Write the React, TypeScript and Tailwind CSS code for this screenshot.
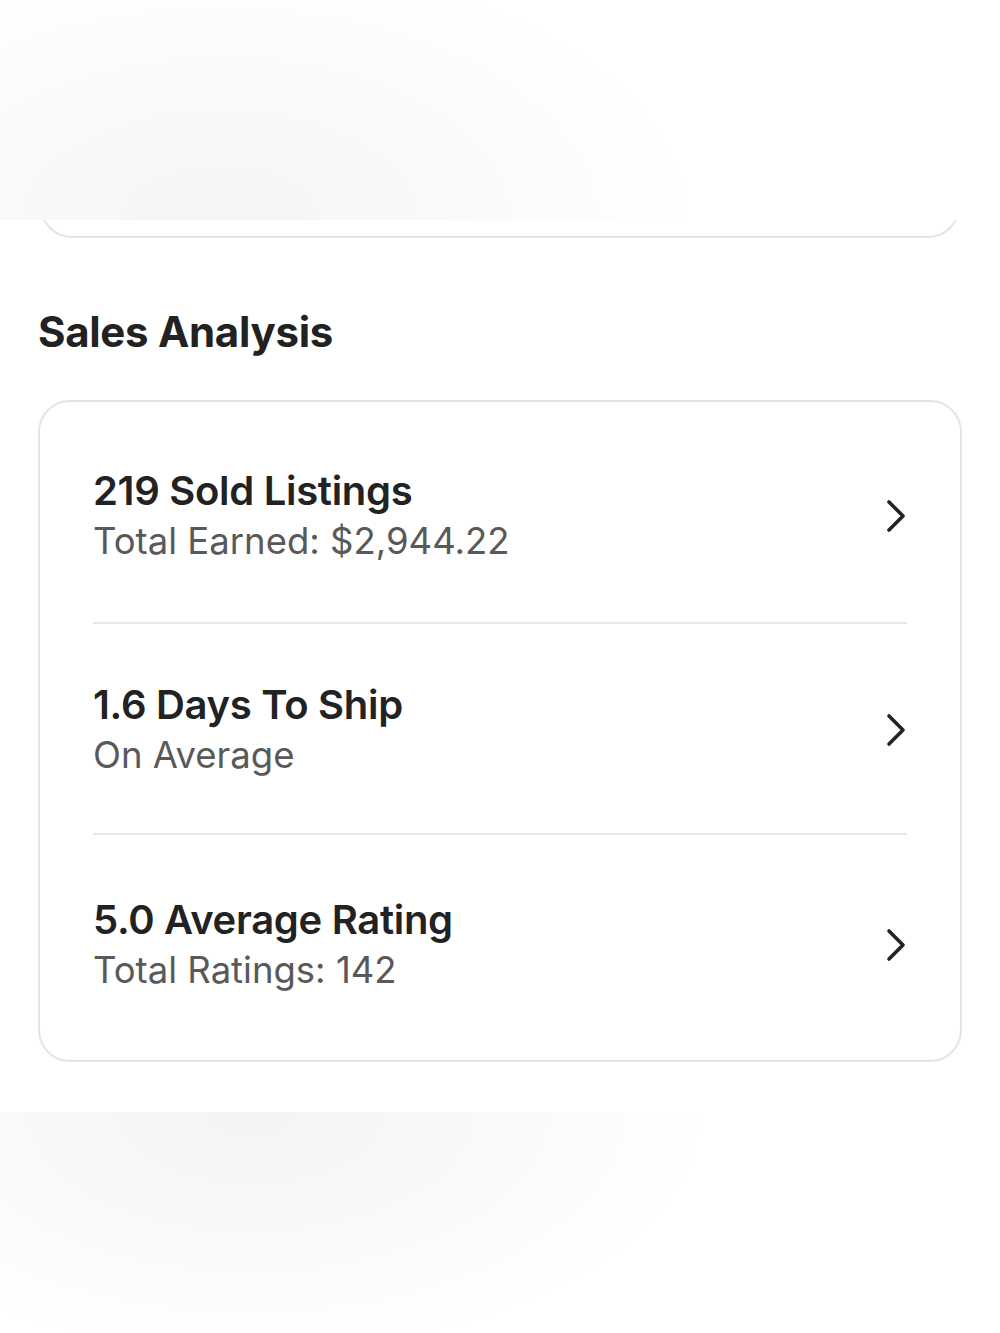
import React from "react";

type Stat = {
  title: string;
  detail: string;
};

const stats: Stat[] = [
  { title: "219 Sold Listings", detail: "Total Earned: $2,944.22" },
  { title: "1.6 Days To Ship", detail: "On Average" },
  { title: "5.0 Average Rating", detail: "Total Ratings: 142" },
];

const Chevron: React.FC = () => (
  <svg width="22" height="36" viewBox="0 0 22 36" fill="none" className="shrink-0">
    <path d="M4 4 L18 18 L4 32" stroke="#222222" strokeWidth="3.6" strokeLinecap="round" strokeLinejoin="round" />
  </svg>
);

// row heights differ a little: the outer rows carry the card's vertical padding
const rowClass = ["h-[222px] pt-[8px] border-b-2", "h-[211px] pt-[2px] border-b-2", "h-[225px] pb-[6px]"];

const StatRow: React.FC<{ stat: Stat; index: number }> = ({ stat, index }) => {
  return (
    <div className={`flex items-center justify-between border-[#e8e8e8] ${rowClass[index]}`}>
      <div className="flex flex-col">
        <p className="text-[40px] leading-[50px] font-semibold text-[#222222] tracking-[-0.3px]">{stat.title}</p>
        <p className="text-[36.5px] leading-[50px] font-normal text-[#595959]">{stat.detail}</p>
      </div>
      <Chevron />
    </div>
  );
};

const SalesAnalysis: React.FC = () => {
  return (
    <div className="relative w-full min-h-[1333px] bg-white font-['Inter','Liberation_Sans',sans-serif] overflow-hidden">
      {/* previous card, mostly scrolled under the header */}
      <div className="pt-[158px]">
        <div className="mx-[40px] h-[80px] rounded-b-[32px] border-2 border-t-0 border-[#e4e4e4] bg-white" />
      </div>

      {/* frosted header */}
      <div className="absolute inset-x-0 top-0 h-[220px] bg-[radial-gradient(ellipse_55%_140%_at_22%_100%,#f5f5f5_0%,#fafafa_45%,#ffffff_85%)]" />

      <h2 className="mt-[69px] px-[38px] text-[42px] leading-[50px] font-bold text-[#222222] tracking-[-0.3px]">
        Sales Analysis
      </h2>

      <div className="mx-[38px] mt-[43px] rounded-[32px] border-2 border-[#e4e4e4] px-[53px]">
        {stats.map((s, i) => (
          <StatRow key={s.title} stat={s} index={i} />
        ))}
      </div>

      {/* bottom frosted bar */}
      <div className="mt-[50px] h-[222px] bg-[radial-gradient(ellipse_50%_120%_at_25%_0%,#f4f4f4_0%,#f9f9f9_45%,#ffffff_90%)]" />
    </div>
  );
};

export default function App() {
  return <SalesAnalysis />;
}
